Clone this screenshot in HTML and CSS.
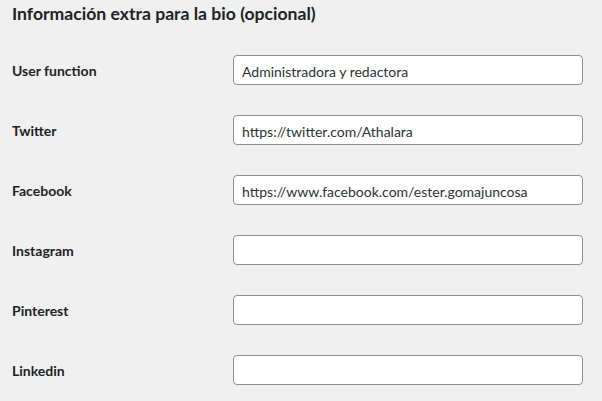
FILE: index.html
```html
<!DOCTYPE html>
<html lang="es">
<head>
  <meta charset="UTF-8">
  <meta name="viewport" content="width=device-width, initial-scale=1.0">
  <title>Perfil</title>
  <link rel="stylesheet" href="styles.css">
</head>
<body>
  <div class="wrap">
    <h2>Información extra para la bio (opcional)</h2>

    <div class="form-table">
      <div class="form-row">
        <label for="user_function">User function</label>
        <input type="text" id="user_function" value="Administradora y redactora">
      </div>
      <div class="form-row">
        <label for="twitter">Twitter</label>
        <input type="text" id="twitter" value="https://twitter.com/Athalara">
      </div>
      <div class="form-row">
        <label for="facebook">Facebook</label>
        <input type="text" id="facebook" value="https://www.facebook.com/ester.gomajuncosa">
      </div>
      <div class="form-row">
        <label for="instagram">Instagram</label>
        <input type="text" id="instagram" value="">
      </div>
      <div class="form-row">
        <label for="pinterest">Pinterest</label>
        <input type="text" id="pinterest" value="">
      </div>
      <div class="form-row">
        <label for="linkedin">Linkedin</label>
        <input type="text" id="linkedin" value="">
      </div>
    </div>
  </div>
</body>
</html>
```

FILE: styles.css
```css
body {
  margin: 0;
  background: #f0f0f1;
  color: #1d2327;
  font-family: Lato, "Noto Sans", sans-serif;
  font-size: 14px;
}
.wrap {
  padding: 0 12px;
}
h2 {
  margin: 0;
  height: 40px;
  padding-top: 2px;
  box-sizing: border-box;
  font-size: 17.6px;
  font-weight: 700;
  line-height: 24px;
}
.form-row {
  display: flex;
  align-items: center;
  height: 60px;
}
.form-row label {
  width: 221px;
  padding-top: 2px;
  font-weight: 700;
  line-height: 18px;
}
.form-row input {
  width: 350px;
  height: 30px;
  box-sizing: border-box;
  padding: 2px 8px 0;
  border: 1px solid #8c8f94;
  border-radius: 4px;
  background: #fff;
  color: #2c3338;
  font-family: inherit;
  font-size: 14px;
}
```
